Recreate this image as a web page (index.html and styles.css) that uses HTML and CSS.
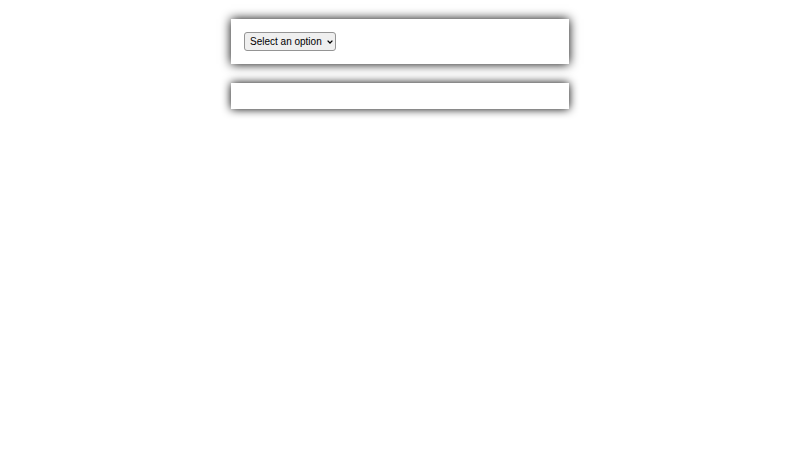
FILE: index.html
```html
<!DOCTYPE html>
<html lang="en">
<head>
    <meta charset="UTF-8">
    <meta name="viewport" content="width=device-width, initial-scale=1.0">
    <title>Options</title>
    <link rel="stylesheet" href="styles.css">
</head>
<body>
    <div class="container">
        <div class="card">
            <div class="picker">
                <select class="options" id="options" aria-label="Select an option">
                    <option value="">Select an option</option>
                </select>
                <svg class="arrow" viewBox="0 0 6 4" aria-hidden="true">
                    <path d="M0.6 0.6 L3 3 L5.4 0.6" fill="none" stroke="black" stroke-width="1.3"/>
                </svg>
            </div>
        </div>
        <div class="card" id="result"></div>
    </div>
</body>
</html>
```

FILE: styles.css
```css
body {
    margin: 0;
    background: white;
    font-family: "Liberation Sans", Arial, sans-serif;
}
.container {
    display: flex;
    flex-direction: column;
    gap: 19px;
    max-width: 338px;
    margin: 19px auto;
}
.card {
    display: flex;
    padding: 13px;
    background: white;
    box-shadow: 0 0 10px black;
}
.picker {
    display: flex;
    position: relative;
}
.options {
    appearance: none;
    height: 19px;
    padding: 0 13px 0 5px;
    border: 1px solid #949494;
    border-radius: 3px;
    background: #efefef;
    color: black;
    font-family: inherit;
    font-size: 10px;
}
/* arrow sits over the select */
.arrow {
    position: absolute;
    top: 8px;
    right: 3px;
    width: 6px;
    height: 4px;
    pointer-events: none;
}
```
